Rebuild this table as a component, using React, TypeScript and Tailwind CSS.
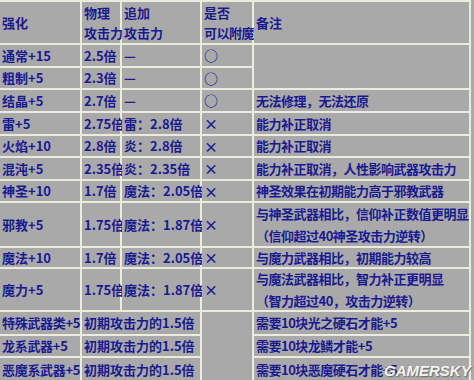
import React from "react";

type Row = {
  name: string;
  phys: string;
  extra: string;
  mark: string;
  note?: string[];
};

const rows: Row[] = [
  { name: "通常+15", phys: "2.5倍", extra: "—", mark: "○" },
  { name: "粗制+5", phys: "2.3倍", extra: "—", mark: "○" },
  { name: "结晶+5", phys: "2.7倍", extra: "—", mark: "○", note: ["无法修理，无法还原"] },
  { name: "雷+5", phys: "2.75倍", extra: "雷：2.8倍", mark: "×", note: ["能力补正取消"] },
  { name: "火焰+10", phys: "2.8倍", extra: "炎：2.8倍", mark: "×", note: ["能力补正取消"] },
  { name: "混沌+5", phys: "2.35倍", extra: "炎：2.35倍", mark: "×", note: ["能力补正取消，人性影响武器攻击力"] },
  { name: "神圣+10", phys: "1.7倍", extra: "魔法：2.05倍", mark: "×", note: ["神圣效果在初期能力高于邪教武器"] },
  {
    name: "邪教+5",
    phys: "1.75倍",
    extra: "魔法：1.87倍",
    mark: "×",
    note: ["与神圣武器相比，信仰补正数值更明显", "（信仰超过40神圣攻击力逆转）"],
  },
  { name: "魔法+10", phys: "1.7倍", extra: "魔法：2.05倍", mark: "×", note: ["与魔力武器相比，初期能力较高"] },
  {
    name: "魔力+5",
    phys: "1.75倍",
    extra: "魔法：1.87倍",
    mark: "×",
    note: ["与魔法武器相比，智力补正更明显", "（智力超过40，攻击力逆转）"],
  },
];

const special = [
  { name: "特殊武器类+5", note: "需要10块光之硬石才能+5" },
  { name: "龙系武器+5", note: "需要10块龙鳞才能+5" },
  { name: "恶魔系武器+5", note: "需要10块恶魔硬石才能+5" },
];

const cell = "bg-[#a9a9a9] flex items-center pl-[2px] whitespace-nowrap";
const note = `${cell} tracking-[-0.5px]`;

export default function App() {
  return (
    <div
      className="relative w-[474px] h-[380px] overflow-hidden bg-[#a9a9a9] text-[13px] font-bold text-[#1a1a90]"
      style={{ fontFamily: '"Noto Sans CJK SC", "Noto Sans", sans-serif' }}
    >
      <div className="grid w-[471px] grid-cols-[80px_38px_78px_50px_215px] grid-rows-[41px_21px_20px_21px_21px_20px_21px_20px_43px_19px_41px_22px_20px_24px] gap-[2px] bg-[#ecebdf] pt-[2px] pr-[2px]">
        {/* header */}
        <div className={cell}>强化</div>
        <div className={`${cell} flex-col !items-start justify-center leading-[20px]`}>
          <span>物理</span>
          <span>攻击力</span>
        </div>
        <div className={`${cell} flex-col !items-start justify-center leading-[20px]`}>
          <span>追加</span>
          <span>攻击力</span>
        </div>
        <div className={`${cell} flex-col !items-start justify-center leading-[20px]`}>
          <span>是否</span>
          <span className="tracking-[-0.5px]">可以附魔</span>
        </div>
        <div className={cell}>备注</div>

        {rows.map((r, i) => (
          <React.Fragment key={r.name}>
            <div className={cell}>{r.name}</div>
            <div className={cell}>{r.phys}</div>
            <div className={cell}>{r.extra}</div>
            <div className={`${cell} text-[14px]`}>{r.mark}</div>
            {i === 0 && <div className={`${cell} row-span-2`} />}
            {r.note && (
              <div className={`${note} flex-col !items-start justify-center leading-[22px]`}>
                {r.note.map((n) => (
                  <span key={n}>{n}</span>
                ))}
              </div>
            )}
          </React.Fragment>
        ))}

        {special.map((s, i) => (
          <React.Fragment key={s.name}>
            <div className={`${cell} tracking-[-0.3px]`}>{s.name}</div>
            <div className={`${cell} col-span-2`}>初期攻击力的1.5倍</div>
            {i === 0 && <div className={`${cell} row-span-3`} />}
            <div className={note}>{s.note}</div>
          </React.Fragment>
        ))}
      </div>

      {/* watermark */}
      <div
        className="absolute left-[384px] top-[360px] text-[15px] font-black italic text-[#f4f4f4]"
        style={{ fontFamily: '"Liberation Sans", sans-serif', textShadow: "1px 1px 1px #6b6b6b" }}
      >
        GAMERSKY
      </div>
    </div>
  );
}
